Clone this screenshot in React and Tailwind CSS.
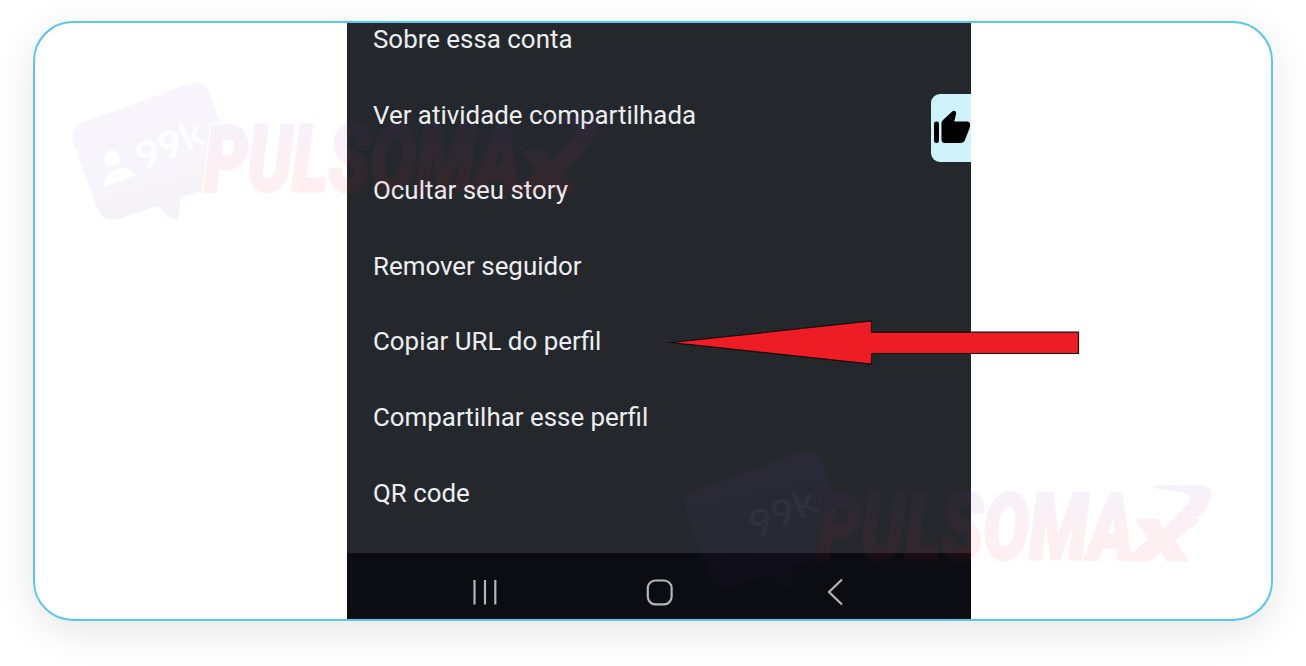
const options = [
  'Sobre essa conta',
  'Ver atividade compartilhada',
  'Ocultar seu story',
  'Remover seguidor',
  'Copiar URL do perfil',
  'Compartilhar esse perfil',
  'QR code',
];

function Watermark({ id, className, dark }) {
  return (
    <svg className={className} width="540" height="150" viewBox="65 78 540 150" aria-hidden="true">
      <defs>
        <linearGradient id={id} gradientUnits="userSpaceOnUse" x1="0" y1="120" x2="0" y2="194">
          <stop offset="0" stopColor="#7a2fc4" />
          <stop offset="0.6" stopColor="#e82858" />
          <stop offset="1" stopColor="#f5102c" />
        </linearGradient>
        <linearGradient id={`${id}-bubble`} gradientUnits="userSpaceOnUse" x1="130" y1="90" x2="160" y2="218">
          <stop offset="0" stopColor="#8a35d6" />
          <stop offset="0.55" stopColor="#7a35b8" />
          <stop offset="1" stopColor="#4a2070" />
        </linearGradient>
      </defs>
      <path
        d="M82 123 L188 84 Q205 80 210 94 L219 121 L210 124 L202 191 L181 197 L178 219 Q175 221 171 217 L157 206 L119 219 Q103 223 97 208 L73 142 Q70 128 82 123Z"
        fill={`url(#${id}-bubble)`}
        fillOpacity="0.055"
      />
      {!dark && (
        <g fill="#fff">
          <circle cx="112" cy="158.500" r="8" />
          <path d="M103 187 C104 172 125 159 136 175Z" />
        </g>
      )}
      <text
        transform="translate(143 171) rotate(-24)"
        fontFamily="Lato, sans-serif"
        fontWeight="700"
        fontSize="37"
        textLength="70"
        lengthAdjust="spacingAndGlyphs"
        fill={dark ? '#8fb0b8' : '#fff'}
        fillOpacity={dark ? 0.08 : 1}
      >
        99k
      </text>
      <g
        opacity="0.062"
        fill={`url(#${id})`}
        stroke={`url(#${id})`}
        strokeWidth="3"
        strokeLinejoin="round"
        fontFamily="Roboto, sans-serif"
        fontStyle="italic"
        fontWeight="900"
      >
        <text x="204" y="191" fontSize="92" textLength="317" lengthAdjust="spacingAndGlyphs">
          PULSOMA
        </text>
        <text x="518" y="191.500" fontSize="55" textLength="60" lengthAdjust="spacingAndGlyphs">
          X
        </text>
        <path d="M521 192 L575 138 Q583 126 570 123 L543 119 L580 118 Q603 117 595 134 Q592 142 584 147 L543 187 Q538 192 532 192Z" />
      </g>
    </svg>
  );
}

export default function App() {
  return (
    <main className="flex h-[666px] w-[1306px] items-start justify-center overflow-hidden bg-white pt-[21px]">
      <section className="relative flex h-[600px] w-[1240px] rounded-[40px] border-2 border-[#5bc6ec] bg-white pl-[312px] shadow-[0_10px_40px_rgba(0,0,0,0.1)]">
        <div className="relative flex w-[624px] flex-col bg-[#24282c] font-['Roboto',sans-serif]">
          <div className="flex h-[530px] shrink-0 flex-col justify-end pb-[44.4px]">
            <ul className="flex flex-col gap-[45.6px]">
              {options.map((label) => (
                <li key={label} className="flex h-[30px] items-center pl-[26px] text-[25.9px] leading-none whitespace-nowrap text-[#eceef0]">
                  {label}
                </li>
              ))}
            </ul>
          </div>
          <nav className="flex h-[66px] shrink-0 items-center bg-[#0c0d12]">
            <svg className="block" width="624" height="66" viewBox="0 0 624 66" fill="none" stroke="#b4b5b9" strokeWidth="2.200">
              <path d="M127.500 27v24.500M138 27v24.500M148.300 27v24.500" />
              <rect x="300.800" y="27.500" width="23.800" height="23.800" rx="7.500" />
              <path d="M495 26.500L482 39l13 12.500" />
            </svg>
          </nav>
          <div className="absolute top-[71px] right-0 flex h-[68px] w-[40px] items-center rounded-l-[9px] bg-[#cff3fb]">
            <svg width="40" height="68" viewBox="0 0 40 68" fill="#000" aria-label="Curtir">
              <rect x="3" y="27.500" width="5" height="21.500" rx="2.300" />
              <path d="M10.500 29 Q10.500 27.500 12 26 L21.500 17.200 Q23.500 15.800 25 18 Q25.500 19 25 20.500 L23.200 27.500 H36.500 Q39.500 28 39 31.500 L38.600 34 L34 46 Q32.500 49 29.500 49 H14 Q10.500 49 10.500 45.500Z" />
            </svg>
          </div>
        </div>

        <Watermark id="mark-a" className="absolute top-[55px] left-[30px]" />
        <Watermark id="mark-b" className="absolute top-[423px] left-[643px]" dark />

        <svg className="absolute top-[292px] left-[630px]" width="420" height="56" viewBox="665 315 420 56" aria-hidden="true">
          <path d="M671 342.500L871.500 321V332.200H1078.500V353.500H871.500V364.200Z" fill="#ee1c25" stroke="#16090a" strokeWidth="1.200" strokeMiterlimit="20" />
        </svg>
      </section>
    </main>
  );
}
